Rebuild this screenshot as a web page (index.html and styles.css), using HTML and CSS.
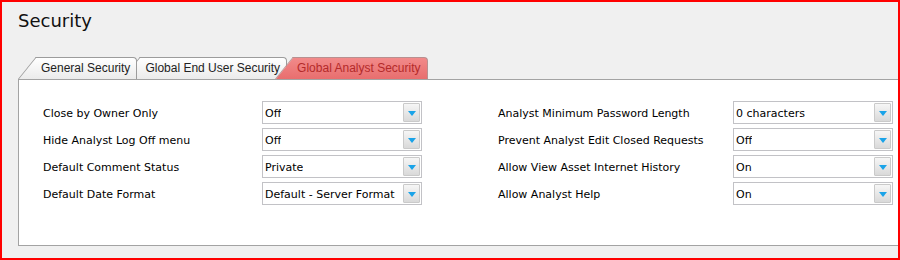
FILE: index.html
```html
<!DOCTYPE html>
<html lang="en">
<head>
    <meta charset="UTF-8">
    <title>Security</title>
    <link rel="stylesheet" href="styles.css">
</head>
<body>
    <div class="frame">
        <h1 class="title">Security</h1>

        <div class="tabs">
            <div class="tab tab-first">General Security</div>
            <div class="tab tab-second">Global End User Security</div>
            <div class="tab active">Global Analyst Security</div>
        </div>

        <div class="panel">
            <div class="group group-left">
                <label>Close by Owner Only</label>
                <div class="select"><span>Off</span><span class="arrow"></span></div>
                <label>Hide Analyst Log Off menu</label>
                <div class="select"><span>Off</span><span class="arrow"></span></div>
                <label>Default Comment Status</label>
                <div class="select"><span>Private</span><span class="arrow"></span></div>
                <label>Default Date Format</label>
                <div class="select"><span>Default - Server Format</span><span class="arrow"></span></div>
            </div>
            <div class="group group-right">
                <label>Analyst Minimum Password Length</label>
                <div class="select"><span>0 characters</span><span class="arrow"></span></div>
                <label>Prevent Analyst Edit Closed Requests</label>
                <div class="select"><span>Off</span><span class="arrow"></span></div>
                <label>Allow View Asset Internet History</label>
                <div class="select"><span>On</span><span class="arrow"></span></div>
                <label>Allow Analyst Help</label>
                <div class="select"><span>On</span><span class="arrow"></span></div>
            </div>
        </div>
    </div>
</body>
</html>
```
FILE: styles.css
```css
body {
    margin: 0;
    font-family: "DejaVu Sans", Verdana, sans-serif;
    color: #000;
}
.frame {
    box-sizing: border-box;
    height: 260px;
    border: 2px solid #ff0000;
    background-color: #f0f0f0;
    padding: 8px 0 0 16px;
    overflow: hidden;
}
.title {
    margin: 0;
    font-size: 18px;
    font-weight: normal;
    line-height: 22px;
    color: #111;
}

/* tabs */
.tabs {
    display: flex;
    margin-top: 25px;
    height: 22px;
    position: relative;
    z-index: 1;
}
.tab {
    position: relative;
    height: 22px;
    line-height: 23px;
    padding: 0 7px 0 23px;
    font-family: "Liberation Sans", Arial, sans-serif;
    font-size: 12px;
    color: #222;
    white-space: nowrap;
}
.tab::before,
.tab::after {
    content: "";
    position: absolute;
    top: 0;
    bottom: 0;
    box-sizing: border-box;
    border-top: 1px solid #9c9c9c;
    background: linear-gradient(#ffffff, #ebebeb);
    z-index: -1;
}
.tab::before {
    left: 0;
    width: 30px;
    border-left: 1px solid #9c9c9c;
    transform-origin: bottom left;
    transform: skewX(-39deg);
}
.tab::after {
    left: 18px;
    right: 0;
    border-right: 1px solid #9c9c9c;
    border-radius: 0 4px 0 0;
}
.tab-first {
    z-index: 3;
}
.tab-second {
    z-index: 2;
    margin-left: -15px;
}
.tab.active {
    z-index: 4;
    margin-left: -12px;
    padding-left: 22px;
    color: #b42a2a;
}
.tab.active::before,
.tab.active::after {
    border-color: #b89090;
    background: linear-gradient(#f28a8a, #e86e6e);
}

/* panel */
.panel {
    box-sizing: border-box;
    height: 167px;
    margin-right: -40px;
    background-color: #ffffff;
    border: 1px solid #a3a3a3;
    padding: 21px 0 0 23px;
    display: flex;
    align-items: flex-start;
    gap: 75px;
    font-size: 11px;
}
.group {
    display: grid;
    row-gap: 4px;
    align-items: center;
    align-content: start;
}
.group label {
    padding: 1px 0 0 1px;
}
.group-left {
    grid-template-columns: 220px 160px;
}
.group-right {
    grid-template-columns: 236px 160px;
}
.select {
    box-sizing: border-box;
    height: 23px;
    border: 1px solid #c2c2c6;
    background-color: #fff;
    display: flex;
    align-items: center;
    justify-content: space-between;
    padding: 1px 1px 1px 2px;
}
.select span:first-child {
    white-space: nowrap;
    overflow: hidden;
    padding-top: 1px;
}
.arrow {
    box-sizing: border-box;
    flex: none;
    width: 17px;
    height: 19px;
    border: 1px solid #cacaca;
    border-radius: 1px;
    background: linear-gradient(#f6f6f6, #d9d9d9);
    display: flex;
    align-items: center;
    justify-content: center;
}
.arrow::after {
    content: "";
    border-left: 4px solid transparent;
    border-right: 4px solid transparent;
    border-top: 5px solid #1aa3e8;
    margin-top: 1px;
}
```
